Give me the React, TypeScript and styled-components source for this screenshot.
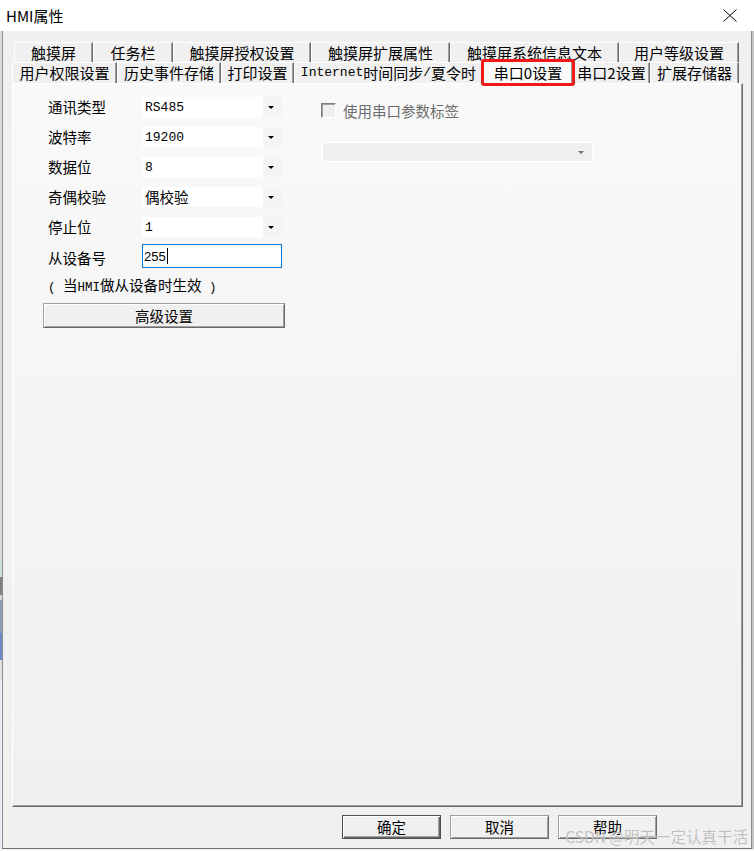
import React from "react";
import styled, { createGlobalStyle, css } from "styled-components";

const GlobalStyle = createGlobalStyle`
  html, body {
    margin: 0;
    padding: 0;
    background: #f4f4f4;
  }
  body {
    font-family: "Noto Sans CJK SC", "Noto Sans", sans-serif;
    font-size: 15px;
    color: #000;
  }
  * { box-sizing: border-box; }
`;

const Screen = styled.div`
  position: relative;
  width: 754px;
  height: 851px;
  overflow: hidden;
  display: flex;
  flex-direction: column;
  background: #f4f4f4;
`;

const TitleBar = styled.div`
  flex: 0 0 31px;
  background: #fff;
  display: flex;
  align-items: center;
  justify-content: space-between;
  padding: 0 17px 0 6px;
`;

const Title = styled.span`
  font-size: 15px;
  line-height: 20px;
`;

const Frame = styled.div`
  flex: 0 0 818px;
  display: flex;
`;

// bits of the window behind the dialog, showing at the left edge
const LeftEdge = styled.div`
  flex: 0 0 2px;
  background: linear-gradient(
    to bottom,
    #dcdcdc 0 529px,
    #c8e0e0 529px 546px,
    #808080 546px 564px,
    #dadada 564px 569px,
    #8c9fb4 569px 602px,
    #6a8acb 602px 629px,
    #e2e2e2 629px 649px,
    #e9ecf4 649px
  );
`;

const RightEdge = styled.div`
  flex: 0 0 2px;
  background: #c4c4c4;
`;

const Body = styled.div`
  flex: 1;
  display: flex;
  flex-direction: column;
  background: #f0f0f0;
  border-left: 1px solid #8c8c8c;
  border-right: 1px solid #8c8c8c;
  border-bottom: 1px solid #707070;
  padding: 11px 8px 0 9px;
`;

const Tabs = styled.div`
  display: flex;
  flex-direction: column;
`;

const TabRow = styled.div<{ $h: number; $indent?: number }>`
  display: flex;
  align-items: flex-start;
  height: ${(p) => p.$h}px;
  margin-left: ${(p) => p.$indent ?? 0}px;
`;

const Tab = styled.div<{ $w: number; $active?: boolean }>`
  flex: 0 0 ${(p) => p.$w}px;
  height: 100%;
  display: flex;
  align-items: center;
  justify-content: center;
  background: #f0f0f0;
  border-top: 1px solid #fff;
  border-left: 1px solid #fff;
  border-right: 1px solid #696969;
  box-shadow: inset -1px 0 #a0a0a0;
  font-size: 15px;
  line-height: 18px;
  white-space: nowrap;

  ${(p) =>
    p.$active &&
    css`
      position: relative;
      z-index: 2;
      height: 24px;
      margin-top: -2px;
      background: #f9f9f9;

      &::after {
        content: "";
        position: absolute;
        left: -3px;
        right: -3px;
        top: -2px;
        bottom: -2px;
        border: 3px solid #f01818;
        border-radius: 3px;
      }
    `}
`;

const Latin = styled.span<{ $size?: number }>`
  font-family: "Liberation Mono", monospace;
  font-size: ${(p) => p.$size ?? 13}px;
`;

const Panel = styled.div`
  flex: 0 0 724px;
  display: flex;
  align-items: flex-start;
  padding: 13px 0 0 30px;
  border-top: 1px solid #fff;
  border-left: 1px solid #fff;
  border-right: 1px solid #696969;
  border-bottom: 1px solid #696969;
  box-shadow: inset -1px -1px #a0a0a0;
  background: linear-gradient(#f9f9f9, #f0f0f0);
`;

const LeftCol = styled.div`
  display: flex;
  flex-direction: column;
`;

const FormGrid = styled.div`
  display: grid;
  grid-template-columns: 94px 140px;
  grid-template-rows: repeat(5, 20px) 21px;
  row-gap: 10px;
  align-items: center;
  margin-left: 5px;
`;

const Label = styled.span`
  font-size: 14.5px;
  line-height: 20px;
  height: 20px;
`;

const Combo = styled.div<{ $disabled?: boolean }>`
  height: 20px;
  display: flex;
  align-items: center;
  justify-content: space-between;
  padding-left: 3px;
  background: #fff;
  font-size: 14.5px;
  line-height: 18px;
  overflow: hidden;

  ${(p) =>
    p.$disabled &&
    css`
      width: 271px;
      margin-left: 1px;
      background: #efefef;
      border: 1px solid #fff;
    `}
`;

const ComboValue = styled(Latin)`
  margin-top: 2px;
`;

const ComboButton = styled.span<{ $disabled?: boolean }>`
  flex: 0 0 19px;
  align-self: stretch;
  display: flex;
  align-items: center;
  justify-content: center;
  padding-right: 3px;
  background: ${(p) => (p.$disabled ? "transparent" : "#f4f4f4")};

  &::before {
    content: "";
    border-left: 3px solid transparent;
    border-right: 3px solid transparent;
    border-top: 3px solid ${(p) => (p.$disabled ? "#707070" : "#000")};
  }
`;

const TextInput = styled.div`
  height: 24px;
  margin-top: -3px;
  display: flex;
  align-items: center;
  padding-left: 1px;
  background: #fff;
  border: 1px solid #0078d7;
  font-family: "Liberation Sans", sans-serif;
  font-size: 13px;
`;

const Caret = styled.span`
  width: 1px;
  height: 16px;
  margin-left: 1px;
  background: #000;
`;

const Note = styled.div`
  margin: 7px 0 0 5px;
  font-size: 14.5px;
  line-height: 20px;
  white-space: pre;
`;

const Button3D = styled.button<{ $w: number; $h: number; $primary?: boolean }>`
  width: ${(p) => p.$w}px;
  height: ${(p) => p.$h}px;
  padding: 0;
  font-family: inherit;
  font-size: 14.5px;
  line-height: 18px;
  color: #000;
  background: #f0f0f0;
  border: 1px solid;
  border-color: #a0a0a0 #696969 #696969 #a0a0a0;
  box-shadow: inset 1px 1px #fff, inset -1px -1px #a0a0a0;

  ${(p) =>
    p.$primary &&
    css`
      border-color: #4e4e4e;
      box-shadow: inset 1px 1px #fff, inset -1px -1px #696969, inset -2px -2px #a0a0a0;
    `}
`;

const WideButton = styled(Button3D)`
  margin-top: 5px;
`;

const RightCol = styled.div`
  display: flex;
  flex-direction: column;
  margin: 6px 0 0 36px;
`;

const CheckRow = styled.label`
  display: flex;
  align-items: center;
  gap: 7px;
  height: 15px;
  color: #6d6d6d;
  font-size: 14.5px;
  line-height: 18px;
`;

const CheckBox = styled.span`
  flex: 0 0 15px;
  height: 15px;
  background: #f0f0f0;
  border: 1px solid;
  border-color: #808080 #fff #fff #808080;
  box-shadow: inset 1px 1px #a0a0a0;
`;

const DisabledCombo = styled(Combo)`
  margin-top: 24px;
`;

const Footer = styled.div`
  display: flex;
  justify-content: flex-end;
  gap: 9px;
  padding: 8px 86px 0 0;
`;

const Watermark = styled.div`
  position: absolute;
  right: 6px;
  bottom: 5px;
  font-size: 15.5px;
  line-height: 20px;
  color: rgba(150, 150, 150, 0.6);
  text-shadow: 0 0 1px rgba(255, 255, 255, 0.9);
  pointer-events: none;
  white-space: nowrap;
`;

const CloseIcon = () => (
  <svg width="14" height="13" viewBox="0 0 14 13">
    <path d="M0.5 0.5 L13.5 12.5 M13.5 0.5 L0.5 12.5" stroke="#000" strokeWidth="1" fill="none" />
  </svg>
);

const topTabs: [string, number][] = [
  ["触摸屏", 79],
  ["任务栏", 80],
  ["触摸屏授权设置", 138],
  ["触摸屏扩展属性", 139],
  ["触摸屏系统信息文本", 169],
  ["用户等级设置", 120],
];

const fields: { label: string; value: string; latin?: boolean }[] = [
  { label: "通讯类型", value: "RS485", latin: true },
  { label: "波特率", value: "19200", latin: true },
  { label: "数据位", value: "8", latin: true },
  { label: "奇偶校验", value: "偶校验" },
  { label: "停止位", value: "1", latin: true },
];

export default function App(): React.ReactElement {
  return (
    <>
      <GlobalStyle />
      <Screen>
        <TitleBar>
          <Title>HMI属性</Title>
          <CloseIcon />
        </TitleBar>
        <Frame>
          <LeftEdge />
          <Body>
            <Tabs>
              <TabRow $h={20} $indent={2}>
                {topTabs.map(([name, w]) => (
                  <Tab key={name} $w={w}>
                    {name}
                  </Tab>
                ))}
              </TabRow>
              <TabRow $h={21}>
                <Tab $w={105}>用户权限设置</Tab>
                <Tab $w={104}>历史事件存储</Tab>
                <Tab $w={73}>打印设置</Tab>
                <Tab $w={189}>
                  <Latin>Internet</Latin>时间同步<Latin>/</Latin>夏令时
                </Tab>
                <Tab $w={90} $active>
                  串口0设置
                </Tab>
                <Tab $w={77}>串口2设置</Tab>
                <Tab $w={89}>扩展存储器</Tab>
              </TabRow>
            </Tabs>

            <Panel>
              <LeftCol>
                <FormGrid>
                  {fields.map((f) => (
                    <React.Fragment key={f.label}>
                      <Label>{f.label}</Label>
                      <Combo>
                        {f.latin ? <ComboValue>{f.value}</ComboValue> : <span>{f.value}</span>}
                        <ComboButton />
                      </Combo>
                    </React.Fragment>
                  ))}
                  <Label>从设备号</Label>
                  <TextInput>
                    255
                    <Caret />
                  </TextInput>
                </FormGrid>
                <Note>
                  <Latin $size={12.5}>( </Latin>当<Latin $size={12.5}>HMI</Latin>做从设备时生效
                  <Latin $size={12.5}> )</Latin>
                </Note>
                <WideButton $w={242} $h={25}>
                  高级设置
                </WideButton>
              </LeftCol>

              <RightCol>
                <CheckRow>
                  <CheckBox />
                  使用串口参数标签
                </CheckRow>
                <DisabledCombo $disabled>
                  <span />
                  <ComboButton $disabled />
                </DisabledCombo>
              </RightCol>
            </Panel>

            <Footer>
              <Button3D $w={99} $h={24} $primary>
                确定
              </Button3D>
              <Button3D $w={99} $h={24}>
                取消
              </Button3D>
              <Button3D $w={99} $h={24}>
                帮助
              </Button3D>
            </Footer>
          </Body>
          <RightEdge />
        </Frame>
        <Watermark>CSDN @明天一定认真干活</Watermark>
      </Screen>
    </>
  );
}
